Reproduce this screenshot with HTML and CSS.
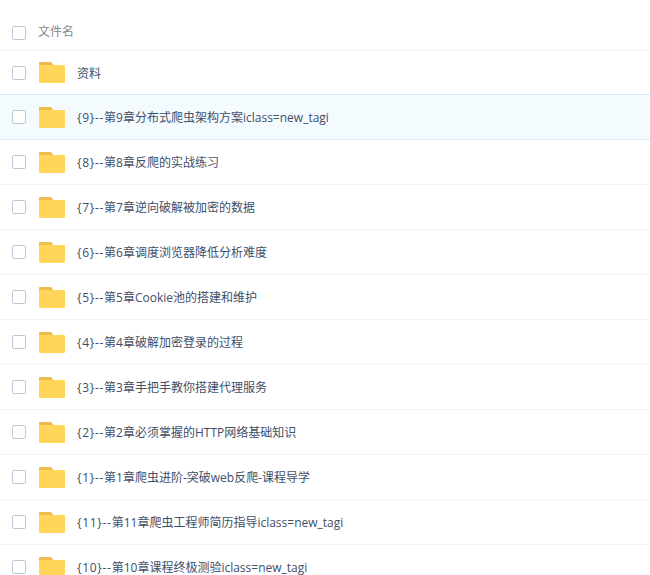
FILE: index.html
```html
<!DOCTYPE html>
<html lang="zh-CN">
<head>
    <meta charset="UTF-8">
    <title>文件列表</title>
    <link rel="stylesheet" href="styles.css">
</head>
<body>
    <svg class="svg-defs" width="0" height="0">
        <symbol id="folder" viewBox="0 0 26 21">
            <path fill="#eebc4b" d="M1 0h10.500q1 0 1.500 1l1 2v6H0V1q0-1 1-1z"/>
            <path fill="#ffd659" d="M1 3H25q1 0 1 1V20q0 1-1 1H1Q0 21 0 20V4Q0 3 1 3z"/>
        </symbol>
    </svg>

    <div class="file-list">
        <div class="list-head">
            <span class="check"></span>
            <span class="head-name">文件名</span>
        </div>
        <div class="row first">
            <span class="check"></span>
            <svg class="folder"><use href="#folder"/></svg>
            <span class="name">资料</span>
        </div>
        <div class="row active">
            <span class="check"></span>
            <svg class="folder"><use href="#folder"/></svg>
            <span class="name"><span class="idx">{9}--</span>第9章分布式爬虫架构方案iclass=new_tagi</span>
        </div>
        <div class="row">
            <span class="check"></span>
            <svg class="folder"><use href="#folder"/></svg>
            <span class="name"><span class="idx">{8}--</span>第8章反爬的实战练习</span>
        </div>
        <div class="row">
            <span class="check"></span>
            <svg class="folder"><use href="#folder"/></svg>
            <span class="name"><span class="idx">{7}--</span>第7章逆向破解被加密的数据</span>
        </div>
        <div class="row">
            <span class="check"></span>
            <svg class="folder"><use href="#folder"/></svg>
            <span class="name"><span class="idx">{6}--</span>第6章调度浏览器降低分析难度</span>
        </div>
        <div class="row">
            <span class="check"></span>
            <svg class="folder"><use href="#folder"/></svg>
            <span class="name"><span class="idx">{5}--</span>第5章Cookie池的搭建和维护</span>
        </div>
        <div class="row">
            <span class="check"></span>
            <svg class="folder"><use href="#folder"/></svg>
            <span class="name"><span class="idx">{4}--</span>第4章破解加密登录的过程</span>
        </div>
        <div class="row">
            <span class="check"></span>
            <svg class="folder"><use href="#folder"/></svg>
            <span class="name"><span class="idx">{3}--</span>第3章手把手教你搭建代理服务</span>
        </div>
        <div class="row">
            <span class="check"></span>
            <svg class="folder"><use href="#folder"/></svg>
            <span class="name"><span class="idx">{2}--</span>第2章必须掌握的HTTP网络基础知识</span>
        </div>
        <div class="row">
            <span class="check"></span>
            <svg class="folder"><use href="#folder"/></svg>
            <span class="name"><span class="idx">{1}--</span>第1章爬虫进阶-突破web反爬-课程导学</span>
        </div>
        <div class="row">
            <span class="check"></span>
            <svg class="folder"><use href="#folder"/></svg>
            <span class="name"><span class="idx">{11}--</span>第11章爬虫工程师简历指导iclass=new_tagi</span>
        </div>
        <div class="row">
            <span class="check"></span>
            <svg class="folder"><use href="#folder"/></svg>
            <span class="name"><span class="idx">{10}--</span>第10章课程终极测验iclass=new_tagi</span>
        </div>
    </div>
</body>
</html>
```

FILE: styles.css
```css
html, body {
    margin: 0;
    padding: 0;
    height: 100%;
    overflow: hidden;
    background: #fff;
}

.svg-defs {
    position: absolute;
}

.file-list {
    font-family: "Open Sans", "Noto Sans CJK SC", sans-serif;
    font-size: 12px;
    line-height: 16px;
    color: #424e67;
}

.list-head {
    height: 51px;
    display: flex;
    align-items: center;
    padding: 16px 0 0 12px;
    box-sizing: border-box;
    border-bottom: 1px solid #f2f6fa;
}

.head-name {
    margin-left: 12px;
    padding-bottom: 2px;
    color: #888;
}

.check {
    flex: none;
    width: 14px;
    height: 14px;
    box-sizing: border-box;
    border: 1px solid #bccad8;
    border-radius: 2px;
    background: #fff;
}

.row {
    height: 45px;
    box-sizing: border-box;
    display: flex;
    align-items: center;
    padding-left: 12px;
    border-bottom: 1px solid #f2f6fa;
}

.row.first {
    height: 44px;
}

.row.active {
    height: 46px;
    margin-top: -1px;
    position: relative;
    background: #f4fbff;
    border-top: 1px solid #daeafb;
    border-bottom: 1px solid #daeafb;
}

.folder {
    flex: none;
    width: 26px;
    height: 21px;
    margin-left: 13px;
}

.name {
    margin-left: 12px;
    padding-top: 2px;
    white-space: nowrap;
}

.idx {
    letter-spacing: 0.7px;
}
```
